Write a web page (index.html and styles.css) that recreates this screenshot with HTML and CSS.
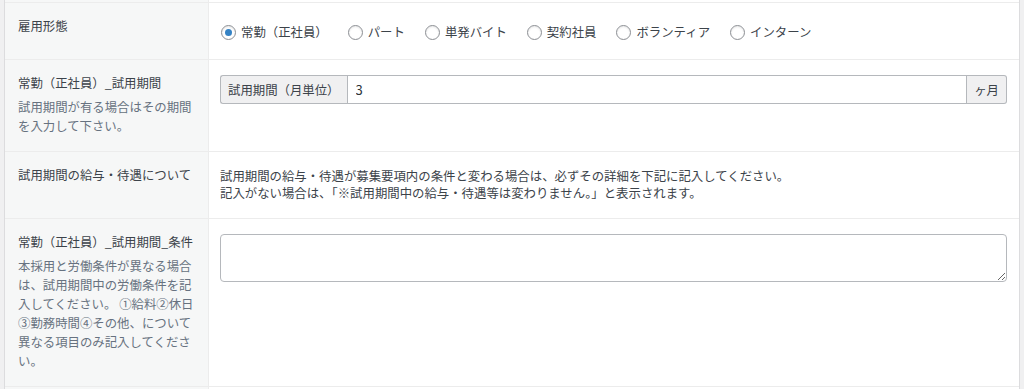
FILE: index.html
```html
<!DOCTYPE html>
<html lang="ja">
<head>
  <meta charset="UTF-8" />
  <meta name="viewport" content="width=device-width, initial-scale=1" />
  <title>求人情報 - 雇用条件</title>
  <link rel="stylesheet" href="styles.css">
</head>
<body>
  <div class="panel">
    <div class="row row-stub">
      <div class="row-label"></div>
      <div class="row-field"></div>
    </div>

    <!-- 雇用形態 -->
    <div class="row">
      <div class="row-label">
        <label class="label-title">雇用形態</label>
      </div>
      <div class="row-field field-radios">
        <div class="radio-group">
          <label class="radio-item"><input type="radio" name="employment" checked> 常勤（正社員）</label>
          <label class="radio-item"><input type="radio" name="employment"> パート</label>
          <label class="radio-item"><input type="radio" name="employment"> 単発バイト</label>
          <label class="radio-item"><input type="radio" name="employment"> 契約社員</label>
          <label class="radio-item"><input type="radio" name="employment"> ボランティア</label>
          <label class="radio-item"><input type="radio" name="employment"> インターン</label>
        </div>
      </div>
    </div>

    <!-- 試用期間 -->
    <div class="row">
      <div class="row-label">
        <label class="label-title" for="trial-months">常勤（正社員）_試用期間</label>
        <p class="description">試用期間が有る場合はその期間を入力して下さい。</p>
      </div>
      <div class="row-field">
        <div class="input-group">
          <span class="addon addon-before">試用期間（月単位）</span>
          <input class="text-input" id="trial-months" type="text" value="3">
          <span class="addon addon-after">ヶ月</span>
        </div>
      </div>
    </div>

    <!-- 給与・待遇 -->
    <div class="row">
      <div class="row-label">
        <span class="label-title">試用期間の給与・待遇について</span>
      </div>
      <div class="row-field">
        <p class="note">試用期間の給与・待遇が募集要項内の条件と変わる場合は、必ずその詳細を下記に記入してください。<br>記入がない場合は、「※試用期間中の給与・待遇等は変わりません。」と表示されます。</p>
      </div>
    </div>

    <!-- 試用期間の条件 -->
    <div class="row">
      <div class="row-label">
        <label class="label-title" for="trial-terms">常勤（正社員）_試用期間_条件</label>
        <p class="description">本採用と労働条件が異なる場合は、試用期間中の労働条件を記入してください。 ①給料②休日③勤務時間④その他、について異なる項目のみ記入してください。</p>
      </div>
      <div class="row-field">
        <textarea class="textarea" id="trial-terms"></textarea>
      </div>
    </div>

    <div class="row row-stub">
      <div class="row-label"></div>
      <div class="row-field"></div>
    </div>
  </div>
</body>
</html>
```

FILE: styles.css
```css
* {
  box-sizing: border-box;
}

body {
  margin: 0;
  padding: 0 4px;
  background: #f0f0f1;
  font-family: "Noto Sans CJK JP", "Noto Sans", sans-serif;
  font-size: 12.4px;
  color: #3c434a;
}

.panel {
  background: #fff;
  border-left: 1px solid #dcdcde;
  border-right: 1px solid #dcdcde;
}

/* each form row: label column + field column */
.row {
  display: grid;
  grid-template-columns: 204px 1fr;
  border-bottom: 1px solid #ececec;
}

.row-label {
  background: #f6f7f7;
  border-right: 1px solid #ececec;
  padding: 14px 8px 15px 13px;
}

.row-field {
  padding: 15px 12px 16px 11px;
}

.row-stub {
  height: 3px;
}

.row-stub .row-label,
.row-stub .row-field {
  padding: 0;
}

.label-title {
  display: block;
  line-height: 19px;
}

.description {
  margin: 5px 0 0;
  line-height: 19px;
  color: #677280;
}

/* radios */
.field-radios {
  padding-top: 16px;
  padding-bottom: 14px;
}

.radio-group {
  display: flex;
  align-items: center;
  gap: 19px;
  height: 26px;
}

.radio-item {
  display: inline-flex;
  align-items: center;
  gap: 5px;
  line-height: 26px;
  white-space: nowrap;
}

.radio-item input {
  appearance: none;
  -webkit-appearance: none;
  margin: 0 0 0 1px;
  width: 15px;
  height: 15px;
  border: 1px solid #8c8f94;
  border-radius: 50%;
  background: #fff;
  box-shadow: inset 0 1px 2px rgb(0 0 0 / 0.1);
  display: inline-flex;
  align-items: center;
  justify-content: center;
}

.radio-item input:checked::before {
  content: "";
  width: 7px;
  height: 7px;
  border-radius: 50%;
  background: #3582c4;
}

/* input with prefix / suffix */
.input-group {
  display: flex;
  height: 29px;
}

.addon {
  display: flex;
  align-items: center;
  padding: 0 7px;
  background: #f0f0f1;
  border: 1px solid #b5b8bc;
  color: #3c434a;
  white-space: nowrap;
}

.addon-before {
  border-radius: 3px 0 0 3px;
  border-right: none;
}

.addon-after {
  border-radius: 0 3px 3px 0;
  border-left: none;
}

.text-input {
  flex: 1;
  min-width: 0;
  margin: 0;
  padding: 0 8px;
  border: 1px solid #b5b8bc;
  font-family: inherit;
  font-size: 13px;
  color: #2c3338;
  outline: none;
}

.note {
  margin: 0;
  line-height: 17px;
  padding-top: 1px;
}

.textarea {
  display: block;
  width: 100%;
  height: 48px;
  margin: 0;
  padding: 4px 8px;
  border: 1px solid #b5b8bc;
  border-radius: 4px;
  font-family: inherit;
  font-size: 13px;
  color: #2c3338;
}
```
